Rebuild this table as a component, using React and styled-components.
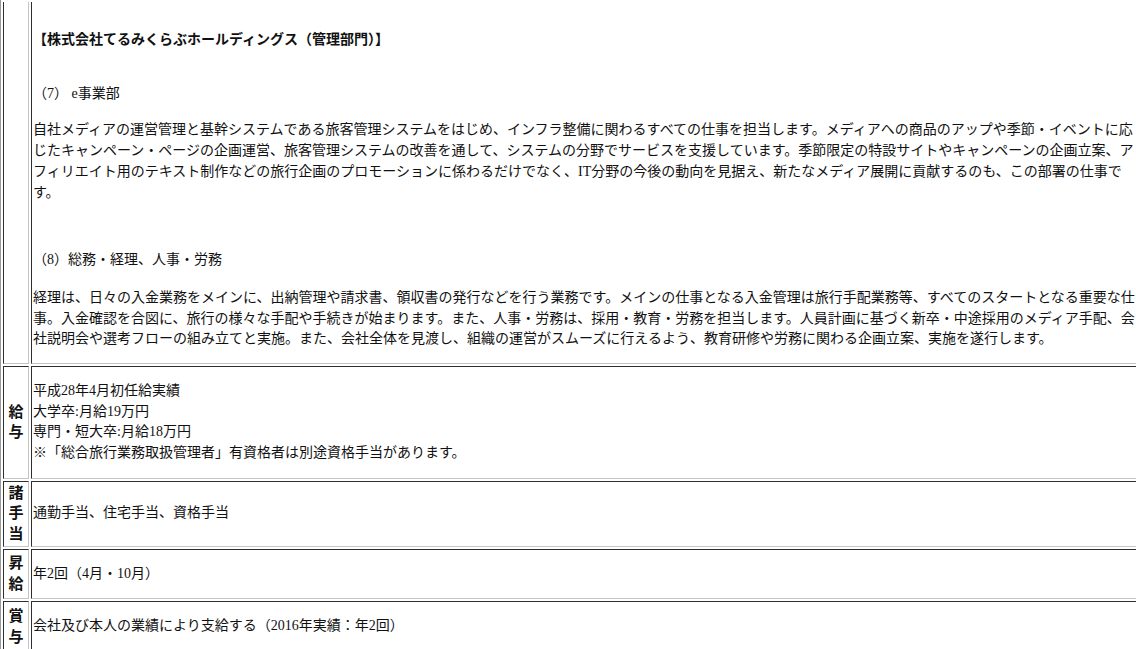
import styled, { createGlobalStyle } from 'styled-components';

const GlobalStyle = createGlobalStyle`
  html, body {
    margin: 0;
    padding: 0;
    overflow: hidden;
    background: #fff;
  }
  body {
    font-family: "Liberation Serif", "Noto Sans CJK JP", serif;
    font-size: 14px;
    color: #111;
    text-autospace: no-autospace;
  }
`;

const Page = styled.div`
  height: 100vh;
  overflow: hidden;
`;

const Table = styled.table`
  width: 1148px;
  border-collapse: separate;
  border-spacing: 2px;
  border-left: 1px solid #9a9a9a;
  border-bottom: 1px solid #333;
  border-top: none;
  line-height: 20.7px;
`;

const Cell = styled.td`
  padding: 1px;
  border-top: ${p => (p.$cut ? 'none' : '1px solid #2e2e2e')};
  border-left: 1px solid #2e2e2e;
  border-bottom: 1px solid #c4c4c4;
  border-right: 1px solid #c4c4c4;
  vertical-align: middle;
`;

const Label = styled(Cell).attrs({ as: 'th' })`
  width: 22px;
  font-size: 15px;
  font-weight: 700;
  text-align: center;
  line-height: 20.6px;
`;

const Para = styled.p`
  margin: ${p => p.$top ?? 13}px 0 ${p => p.$bottom ?? 13}px;
`;

const Heading = styled(Para)`
  font-weight: 700;
`;

export default function App() {
  return (
    <Page>
      <GlobalStyle />
      <Table>
        <tbody>
          <tr>
            <Label $cut />
            <Cell $cut>
              <Heading $top={27} $bottom={0}>
                【株式会社てるみくらぶホールディングス（管理部門）】
              </Heading>
              <Para $top={33} $bottom={0}>（7） e事業部</Para>
              <Para $top={16} $bottom={0}>
                自社メディアの運営管理と基幹システムである旅客管理システムをはじめ、インフラ整備に関わるすべての仕事を担当します。メディアへの商品のアップや季節・イベントに応じたキャンペーン・ページの企画運営、旅客管理システムの改善を通して、システムの分野でサービスを支援しています。季節限定の特設サイトやキャンペーンの企画立案、アフィリエイト用のテキスト制作などの旅行企画のプロモーションに係わるだけでなく、IT分野の今後の動向を見据え、新たなメディア展開に貢献するのも、この部署の仕事です。
              </Para>
              <Para $top={47} $bottom={0}>（8）総務・経理、人事・労務</Para>
              <Para $top={17} $bottom={12}>
                経理は、日々の入金業務をメインに、出納管理や請求書、領収書の発行などを行う業務です。メインの仕事となる入金管理は旅行手配業務等、すべてのスタートとなる重要な仕事。入金確認を合図に、旅行の様々な手配や手続きが始まります。また、人事・労務は、採用・教育・労務を担当します。人員計画に基づく新卒・中途採用のメディア手配、会社説明会や選考フローの組み立てと実施。また、会社全体を見渡し、組織の運営がスムーズに行えるよう、教育研修や労務に関わる企画立案、実施を遂行します。
              </Para>
            </Cell>
          </tr>
          <tr>
            <Label>給与</Label>
            <Cell>
              <Para>
                平成28年4月初任給実績
                <br />
                大学卒:月給19万円
                <br />
                専門・短大卒:月給18万円
                <br />
                ※「総合旅行業務取扱管理者」有資格者は別途資格手当があります。
              </Para>
            </Cell>
          </tr>
          <tr>
            <Label>諸手当</Label>
            <Cell>
              <Para>通勤手当、住宅手当、資格手当</Para>
            </Cell>
          </tr>
          <tr>
            <Label>昇給</Label>
            <Cell>
              <Para>年2回（4月・10月）</Para>
            </Cell>
          </tr>
          <tr>
            <Label>賞与</Label>
            <Cell>
              <Para>会社及び本人の業績により支給する（2016年実績：年2回）</Para>
            </Cell>
          </tr>
        </tbody>
      </Table>
    </Page>
  );
}
